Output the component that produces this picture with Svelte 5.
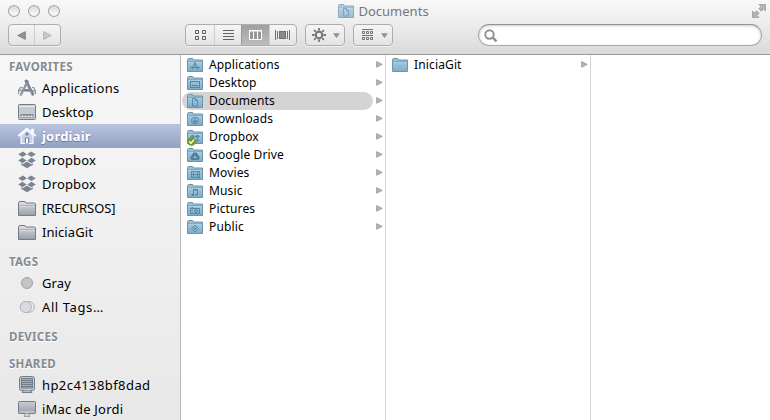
<script>
  const sections = [
    { title: 'FAVORITES', height: 21, items: [
      { name: 'Applications', icon: 'apps', tracking: 0.22 },
      { name: 'Desktop', icon: 'desktop' },
      { name: 'jordiair', icon: 'home', selected: true, tracking: 0.2 },
      { name: 'Dropbox', icon: 'dropbox' },
      { name: 'Dropbox', icon: 'dropbox' },
      { name: '[RECURSOS]', icon: 'folder', tracking: -0.05 },
      { name: 'IniciaGit', icon: 'folder', tracking: 0.08 },
    ] },
    { title: 'TAGS', height: 27, items: [
      { name: 'Gray', icon: 'tag' },
      { name: 'All Tags…', icon: 'tags', tracking: 0.6 },
    ] },
    { title: 'DEVICES', height: 27, items: [] },
    { title: 'SHARED', height: 27, items: [
      { name: 'hp2c4138bf8dad', icon: 'pc', tracking: 0.42 },
      { name: 'iMac de Jordi', icon: 'imac', tracking: 0.2 },
    ] },
  ];
  const folders = ['Applications', 'Desktop', 'Documents', 'Downloads', 'Dropbox', 'Google Drive', 'Movies', 'Music', 'Pictures', 'Public'];
</script>

{#snippet sideIcon(kind)}
  <svg class="side-icon" width="20" height="20" viewBox="0 0 20 20" fill="none" stroke="#737c88">
    {#if kind === 'apps'}
      <path d="M1.5 16V12L3 9.5H5.5M14 12.5H18.5V16M15 9.5H17L18.5 12.5M1.5 12.5H5" stroke="#8c96a2" fill="#c5cad0" />
      <path d="M5 12.3H15" stroke-width="2.4" />
      <path d="M11 2.5L3.5 17.5" stroke="#8c96a2" stroke-width="2.4" />
      <path d="M8.5 2L16.3 17.3" stroke-width="2.8" />
      <path d="M8.8 4L15.5 16.5" stroke="#a9b0b9" stroke-width=".7" />
    {:else if kind === 'desktop'}
      <rect x="1.5" y="2.5" width="17" height="15" rx="1" fill="#c5cad0" />
      <path d="M2 4.5H18" stroke="#eef0f2" />
      <rect x="3.5" y="12" width="13" height="4" fill="#858e99" stroke="none" />
      <path d="M4.5 14.5H16" stroke="#fff" stroke-width="1.6" stroke-dasharray="2 1" />
    {:else if kind === 'home'}
      <g stroke="#f7f9fd" stroke-linejoin="round">
        <path d="M4 9.5V17.5H16V9.5L10 4Z" fill="#c8d1e5" stroke-width="1.2" />
        <path d="M14.5 6V3.2H16.5V8" fill="#fff" stroke-width="1" />
        <path d="M1.2 10L10 2.3L18.8 10" stroke-width="1.7" />
      </g>
      <rect x="7.8" y="11.5" width="4.4" height="6" fill="#7889b0" stroke="none" />
      <circle cx="10" cy="8" r="1.7" fill="#7c8eb6" stroke="none" />
      <rect x="9" y="12.5" width="2" height="4.5" fill="#fff" stroke="none" />
    {:else if kind === 'dropbox'}
      <g fill="#7b8490" stroke="none">
        <path d="M6 1.5L9.8 4.3L5.5 7.1L1.2 4.2ZM14 1.5L18.8 4.2L14.5 7.1L10.2 4.3Z" />
        <path d="M5.5 7.8L9.6 10.5L5.7 13.2L1.2 10.5ZM14.5 7.8L18.8 10.5L14.3 13.2L10.4 10.5Z" />
        <path d="M10 11.5L14.2 14.3L16 13.2V14.8L10 18.2L4 14.8V13.2L5.8 14.3Z" />
      </g>
    {:else if kind === 'folder'}
      <path d="M1.5 17V5L2.5 3.5H8L9.2 5H17.5L18.5 6V17Z" fill="#d5d8dd" />
      <path d="M1.5 7.5H18.5V17.5H1.5Z" fill="url(#metal)" />
      <path d="M2 8H18" stroke="#e5e8eb" />
    {:else if kind === 'tag'}
      <circle cx="10" cy="10" r="5.5" fill="#c4c4c4" stroke="#a1a1a1" />
    {:else if kind === 'tags'}
      <circle cx="12" cy="10" r="5.4" fill="#e7eaee" stroke="#b1b6bc" />
      <circle cx="8.8" cy="10" r="5.6" fill="#d8dce1" stroke="#adb2b8" />
    {:else if kind === 'pc'}
      <rect x="2.5" y="1.5" width="15" height="14" rx="2" fill="#c8cdd2" />
      <rect x="4.5" y="3.5" width="11" height="9.5" fill="#a4abb4" />
      <path d="M5 5.5H15M5 7.5H15M5 9.5H15M5 11.5H15" stroke="#6a737e" stroke-width=".8" />
      <path d="M6.5 15.5L5 17.5H15L13.5 15.5" fill="#b9bec5" />
    {:else}
      <rect x="1.5" y="2.5" width="17" height="12" rx=".8" fill="url(#metal)" />
      <path d="M2.5 13H17.5" stroke="#d9dcdf" />
      <path d="M8 14.5L7 17.5H13L12 14.5" fill="#ccd0d5" stroke="#9aa2aa" />
    {/if}
  </svg>
{/snippet}

{#snippet folderIcon(kind)}
  <svg class="folder-icon" width="16" height="14" viewBox="0 0 16 14" fill="none" stroke="#5685a3">
    <path d="M.5 13V1.3L1.3.5H5.7L6.5 2H15.5V13Z" fill="#9ac0d8" stroke="#6f93a9" />
    <path d="M.5 3.5H15.5V13.5H.5Z" fill="url(#blue)" stroke="#6c93ac" />
    <path d="M1 4.1H15" stroke="#b9d9e9" stroke-width=".8" />
    {#if kind === 'Applications'}
      <path d="M8.2 4.5L5.2 11.5M7.8 4.5L11 11.5M3 9.5H13" stroke-width="1.1" />
    {:else if kind === 'Desktop'}
      <rect x="3.5" y="5.5" width="9" height="6" /><path d="M5 9.5H11" />
    {:else if kind === 'Documents'}
      <path d="M5.5 4.5H8.5L10.5 6.5V12H5.5ZM8.5 4.5V6.5H10.5" stroke-width=".9" />
    {:else if kind === 'Downloads'}
      <circle cx="8" cy="8.5" r="3.5" stroke-width=".9" /><path d="M8 6V10M6 8.5L8 10.5L10 8.5" stroke-width="1.1" />
    {:else if kind === 'Dropbox'}
      <path d="M5 5L8 6.5L5.5 8L3.5 6.7ZM11 5L8 6.5L10.5 8L12.5 6.7ZM5.5 9L8 10.8L10.5 9L12 10.5L8 12.5Z" fill="#5c8cab" stroke-width=".6" />
    {:else if kind === 'Google Drive'}
      <path d="M6.5 4.5H9.5L13 10L11.5 12H4.5L3 10Z" fill="#4b7c9a" stroke="none" /><path d="M8 7.2L9.7 10H6.3Z" fill="#9fc4da" stroke="none" />
      <path d="M6.5 4.5L11 12M3.5 10H12.7" stroke="#77a5c0" stroke-width=".5" />
    {:else if kind === 'Movies'}
      <path d="M4.5 5V12M6.5 5V12M10.5 5V12M12.5 5V12M4.5 5.5H12.5M4.5 8.5H12.5M4.5 11.5H12.5" stroke-width=".9" />
    {:else if kind === 'Music'}
      <path d="M6.5 11V5.5H10.5V10.5" /><path d="M6 6H10.5" /><ellipse cx="5.7" cy="11" rx="1.2" ry=".9" fill="#4b7894" stroke="none" /><ellipse cx="9.7" cy="10.6" rx="1.2" ry=".9" fill="#4b7894" stroke="none" />
    {:else if kind === 'Pictures'}
      <path d="M3.5 6.5H12.5V11.5H3.5ZM4.5 5.5H6" /><circle cx="9" cy="9" r="1.4" /><path d="M4.5 8.5H6" />
    {:else if kind === 'Public'}
      <path d="M8 5L11.5 8.5L8 12L4.5 8.5Z" stroke-width=".9" /><path d="M8 7.2L9.3 8.5L8 9.8L6.7 8.5Z" fill="#4b7894" stroke="none" />
    {/if}
  </svg>
{/snippet}

{#snippet arrow()}
  <svg class="arrow" width="7" height="7" viewBox="0 0 7 7"><path d="M.6.6L6.2 3.4L.6 6.2Z" fill="#b5b5b5" stroke="#969696" stroke-width=".8" /></svg>
{/snippet}

<div class="window">
  <svg class="defs" width="0" height="0">
    <defs>
      <linearGradient id="metal" x2="0" y2="1"><stop stop-color="#c9cdd3" /><stop offset="1" stop-color="#969ea9" /></linearGradient>
      <linearGradient id="blue" x2="0" y2="1"><stop stop-color="#a3c8df" /><stop offset="1" stop-color="#7dadca" /></linearGradient>
      <linearGradient id="lamp" x2="0" y2="1"><stop stop-color="#d6d6d6" /><stop offset=".5" stop-color="#ececec" /><stop offset="1" stop-color="#fff" /></linearGradient>
    </defs>
  </svg>
  <header>
    <div class="titlebar">
      <svg class="lights" width="54" height="14" viewBox="0 0 54 14" fill="url(#lamp)" stroke="#a5a5a5" stroke-width="1.1">
        <circle cx="7" cy="7" r="5.5" /><circle cx="27" cy="7" r="5.5" /><circle cx="47" cy="7" r="5.5" />
      </svg>
      <div class="title"><span class="faded">{@render folderIcon('Documents')}</span><span class="caption">Documents</span></div>
      <svg class="fullscreen" width="14" height="14" viewBox="0 0 14 14" fill="#b4b4b4" stroke="#939393" stroke-width=".7">
        <path d="M7 .5H13.5V7L11.5 5L9.3 7.2L6.8 4.7L9 2.5ZM.5 7L2.5 9L4.7 6.8L7.2 9.3L5 11.5L7 13.5H.5Z" />
      </svg>
    </div>
    <div class="toolbar">
      <div class="group nav">
        <span class="cell"><svg width="9" height="9" viewBox="0 0 9 9"><path d="M.7 4.5L8.4.6V8.4Z" fill="#929292" stroke="#757575" stroke-width=".7" /></svg></span>
        <span class="cell"><svg width="9" height="9" viewBox="0 0 9 9"><path d="M8.3 4.5L.6.6V8.4Z" fill="#c9c9c9" stroke="#ababab" stroke-width=".7" /></svg></span>
      </div>
      <div class="group views">
        <span class="cell first"><svg width="12" height="10" viewBox="0 0 12 10" fill="none" stroke="#5d5d5d"><path d="M1.5.5h3v3h-3zM8.5.5h3v3h-3zM1.5 6.5h3v3h-3zM8.5 6.5h3v3h-3z" /></svg></span>
        <span class="cell"><svg width="11" height="10" viewBox="0 0 11 10" stroke="#626262"><path d="M0 .5H11M0 3.5H11M0 6.5H11M0 9.5H11" /></svg></span>
        <span class="cell active"><svg width="13" height="10" viewBox="0 0 13 10" fill="#969696" stroke="#fff"><path d="M.5.5H12.5V9.5H.5Z" /><path d="M4.5 0V10M8.5 0V10M0 1H13" /></svg></span>
        <span class="cell"><svg width="15" height="10" viewBox="0 0 15 10" fill="#8a8a8a" stroke="#707070"><path d="M.5 0V10M2.5 1V9M12.5 1V9M14.5 0V10" /><rect x="4.5" y="1.5" width="6" height="7" /></svg></span>
      </div>
      <div class="group menu">
        <svg width="14" height="14" viewBox="0 0 14 14" fill="none" stroke="#777"><circle cx="7" cy="7" r="3.3" stroke-width="2.2" /><path d="M7 0V2.6M7 11.4V14M0 7H2.6M11.4 7H14M2.1 2.1L3.8 3.8M10.2 10.2L11.9 11.9M2.1 11.9L3.8 10.2M10.2 3.8L11.9 2.1" stroke-width="1.8" /></svg>
        <svg width="7" height="5" viewBox="0 0 7 5"><path d="M0 .3H7L3.5 5Z" fill="#929292" /></svg>
      </div>
      <div class="group menu arrange">
        <svg width="12" height="12" viewBox="0 0 12 12" fill="none" stroke="#666"><path d="M0 .5H11M0 6.5H11M.5 2.5h2v2h-2zM4.5 2.5h2v2h-2zM8.5 2.5h2v2h-2zM.5 8.5h2v2h-2zM4.5 8.5h2v2h-2zM8.5 8.5h2v2h-2z" stroke-width=".9" /></svg>
        <svg width="7" height="5" viewBox="0 0 7 5"><path d="M0 .3H7L3.5 5Z" fill="#929292" /></svg>
      </div>
      <div class="search">
        <svg width="14" height="14" viewBox="0 0 14 14" fill="none" stroke="#909090"><circle cx="5.5" cy="5.5" r="4.2" stroke-width="1.9" /><path d="M8.7 8.7L12.5 12.3" stroke-width="2.4" /></svg>
      </div>
    </div>
  </header>
  <main>
    <aside>
      {#each sections as section}
        <h2 style:height="{section.height}px">{section.title}</h2>
        {#each section.items as item}
          <div class="place" class:selected={item.selected}>
            {@render sideIcon(item.icon)}
            <span style:letter-spacing="{item.tracking ?? 0.15}px">{item.name}</span>
          </div>
        {/each}
      {/each}
    </aside>
    <section class="column">
      {#each folders as name}
        <div class="entry" class:current={name === 'Documents'}>
          <div class="pill">
            {@render folderIcon(name)}
            {#if name === 'Dropbox'}
              <svg class="badge" width="9" height="9" viewBox="0 0 9 9"><circle cx="4.5" cy="4.5" r="4.3" fill="#719b20" /><path d="M2.2 4.5L4 6.3L7 2.6" fill="none" stroke="#fff" stroke-width="1.4" /></svg>
            {/if}
            <span>{name}</span>
          </div>
          {@render arrow()}
        </div>
      {/each}
    </section>
    <section class="column">
      <div class="entry"><div class="pill">{@render folderIcon('plain')}<span>IniciaGit</span></div>{@render arrow()}</div>
    </section>
    <section class="column last"></section>
  </main>
</div>

<style>
  :global(body) { margin: 0; background: #fff; }
  .window { width: 770px; height: 420px; overflow: hidden; display: flex; flex-direction: column; font-family: "Noto Sans", "Open Sans", sans-serif; color: #000; }
  .defs { position: absolute; }
  svg { display: block; flex: none; }
  header { box-sizing: border-box; height: 55px; flex: none; border-bottom: 1px solid #999; background: linear-gradient(#f8f8f8, #ededed 45%, #d9d9d9); }
  .titlebar { height: 24px; display: flex; align-items: flex-start; padding: 4px 4px 0 7px; box-sizing: border-box; }
  .title { flex: 1; display: flex; justify-content: center; gap: 4px; padding-right: 46px; color: #777; }
  .caption { font-size: 13px; line-height: 15px; letter-spacing: .02px; }
  .faded { opacity: .75; }
  .toolbar { display: flex; align-items: flex-start; padding: 0 8px; }
  .group { box-sizing: border-box; height: 22px; border: 1px solid #aeaeae; border-radius: 4px; display: flex; overflow: hidden; background: linear-gradient(#f5f5f5, #e4e4e4); box-shadow: 0 1px 0 #f0f0f0; }
  .nav { width: 53px; }
  .cell { flex: 1; display: flex; align-items: center; justify-content: center; }
  .cell + .cell { border-left: 1px solid #cdcdcd; }
  .views { width: 112px; margin-left: 124px; }
  .cell.first { flex: 0 0 28px; }
  .cell.active { background: linear-gradient(#a0a0a0, #bcbcbc); border-color: #999; }
  .menu { width: 40px; margin-left: 8px; align-items: center; justify-content: space-between; padding: 0 4px 0 6px; }
  .arrange { padding-left: 8px; }
  .search { flex: 1; margin-left: 85px; box-sizing: border-box; height: 22px; border: 1px solid #aaa; border-top-color: #929292; border-radius: 11px; background: #fff; box-shadow: inset 0 1px 3px #ccc; padding: 4px 5px; }
  main { flex: 1; min-height: 0; display: flex; }
  aside { box-sizing: border-box; width: 181px; flex: none; overflow: hidden; border-right: 1px solid #b8b8b8; background: linear-gradient(#f7f7f7, #e8e8e8); }
  h2 { margin: 0; box-sizing: border-box; padding: 3px 0 0 9px; font-size: 11.5px; line-height: 17px; font-weight: 700; letter-spacing: .25px; color: #858b93; text-shadow: 0 1px #fff; }
  h2:not(:first-child) { padding-top: 9px; }
  .place { height: 24px; display: flex; align-items: center; gap: 5px; padding-left: 17px; font-size: 13px; line-height: 24px; white-space: nowrap; }
  .selected { background: linear-gradient(#b9c4df, #91a1c2); color: #fff; font-weight: 700; text-shadow: 0 1px 1px #63739a; }
  .column { box-sizing: border-box; width: 205px; flex: none; padding-top: 1px; border-right: 1px solid #d6d6d6; }
  .last { flex: 1; border: 0; }
  .entry { height: 18px; display: flex; align-items: center; }
  .pill { position: relative; box-sizing: border-box; width: 191px; height: 18px; margin-left: 1px; padding-left: 5px; border-radius: 9px; display: flex; align-items: center; gap: 6px; font-size: 12px; line-height: 18px; letter-spacing: .14px; }
  .current .pill { background: #d4d4d4; }
  .badge { position: absolute; left: 5px; top: 9px; }
  .arrow { margin: -2px 0 0 3px; }
</style>
